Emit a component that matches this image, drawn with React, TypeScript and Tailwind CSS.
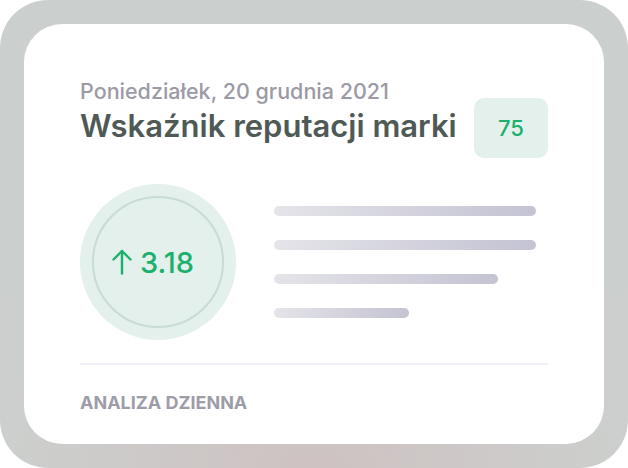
const bars = [262, 262, 224, 135]

export default function App() {
  return (
    <div className="w-[628px] h-[468px] bg-white font-['Inter',sans-serif]">
      <div className="w-full h-full rounded-[48px] p-6 bg-[radial-gradient(ellipse_70%_60%_at_50%_100%,#cec2c2_0%,#cccfcd_70%,#cbcfcd_100%)]">
        <div className="h-full rounded-[38px] bg-white px-14 pt-[53px]">
          <div className="flex justify-between">
            <div>
              <p className="text-[21.5px] leading-[28px] font-medium text-[#9b9aa5]">
                Poniedziałek, 20 grudnia 2021
              </p>
              <h1 className="mt-[2px] text-[31px] leading-[38px] font-semibold text-[#4f5955]">
                Wskaźnik reputacji marki
              </h1>
            </div>
            <div className="mt-[21px] w-[74px] h-[60px] rounded-[10px] bg-[#e3f0eb] flex items-center justify-center text-[22px] font-medium text-[#1bb06c]">
              75
            </div>
          </div>

          <div className="mt-[26px] flex items-center gap-[38px]">
            <div className="w-[156px] h-[156px] shrink-0 rounded-full bg-[#e3f0eb] flex items-center justify-center">
              <div className="w-[132px] h-[132px] rounded-full border-2 border-[#c9dcd3] flex items-center justify-center gap-[8px] pr-[10px] text-[29px] font-medium text-[#1bb06c]">
                <svg
                  width="20"
                  height="26"
                  viewBox="0 0 20 26"
                  fill="none"
                  stroke="currentColor"
                  strokeWidth="2.4"
                  strokeLinecap="round"
                  strokeLinejoin="round"
                >
                  <path d="M10 2v22.5" />
                  <path d="M1.5 10.5L10 2l8.5 8.5" />
                </svg>
                <span className="leading-none">3.18</span>
              </div>
            </div>
            <div className="flex flex-col gap-6">
              {bars.map((w, i) => (
                <div
                  key={i}
                  className="h-[10px] rounded-full bg-gradient-to-r from-[#e4e4e9] to-[#c4c3d3]"
                  style={{ width: w }}
                />
              ))}
            </div>
          </div>

          <div className="mt-[23px] h-[2px] bg-[#eef1f5]" />

          <p className="mt-[26px] text-[18px] leading-[24px] font-bold text-[#9d9ca8]">
            ANALIZA DZIENNA
          </p>
        </div>
      </div>
    </div>
  )
}
